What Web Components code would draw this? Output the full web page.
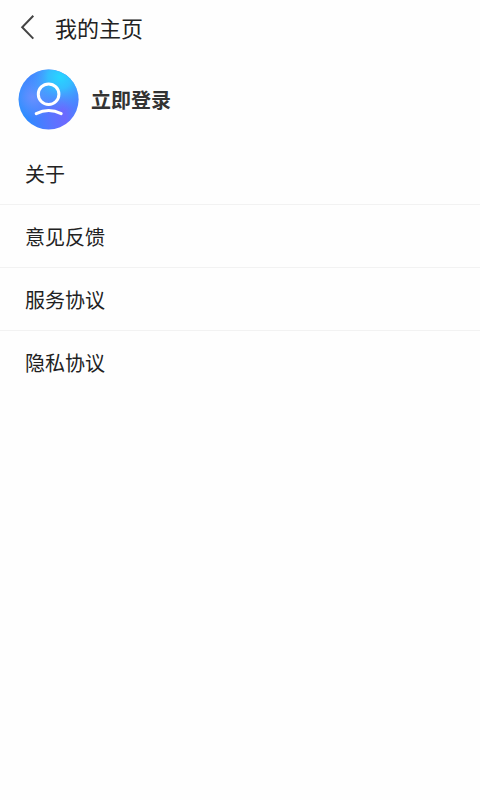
<!DOCTYPE html>
<html lang="zh-CN">
<head>
<meta charset="utf-8">
<meta name="viewport" content="width=device-width, initial-scale=1">
<title>我的主页</title>
<style>
  body {
    margin: 0;
    background: #fefefe;
    color: #222;
    font-family: "Noto Sans CJK SC", sans-serif;
  }
</style>
</head>
<body>
<profile-page>
  <page-header slot="header">我的主页</page-header>
  <login-card slot="account">立即登录</login-card>
  <menu-list>
    <menu-item>关于</menu-item>
    <menu-item>意见反馈</menu-item>
    <menu-item>服务协议</menu-item>
    <menu-item>隐私协议</menu-item>
  </menu-list>
</profile-page>
<script>
  const define = (name, html) => customElements.define(name, class extends HTMLElement {
    constructor() {
      super();
      const template = document.createElement('template');
      template.innerHTML = html;
      this.attachShadow({ mode: 'open' }).append(template.content.cloneNode(true));
    }
  });

  define('profile-page', `
    <style>
      :host { display: flex; flex-direction: column; min-height: 100vh; }
      main { display: flex; flex-direction: column; }
    </style>
    <slot name="header"></slot>
    <main>
      <slot name="account"></slot>
      <slot></slot>
    </main>`);

  define('page-header', `
    <style>
      :host { display: block; }
      header { display: flex; align-items: center; height: 54px; padding-left: 15px; gap: 16px; }
      button { display: flex; padding: 0; border: 0; background: none; color: #444; cursor: pointer; }
      h1 { margin: 0; font-size: 22px; line-height: 32px; font-weight: 400; }
    </style>
    <header>
      <button type="button" aria-label="返回">
        <svg width="24" height="28" viewBox="0 0 24 28" fill="none" stroke="currentColor" stroke-width="2" aria-hidden="true">
          <path d="M18.3 2.8 7.2 14.2 18.3 25.6"/>
        </svg>
      </button>
      <h1><slot></slot></h1>
    </header>`);

  define('login-card', `
    <style>
      :host { display: block; padding: 15px 18px 12px; }
      button {
        display: flex; align-items: center; gap: 12px; width: 100%; padding: 0;
        border: 0; background: none; color: #333; cursor: pointer;
        font: 700 20px/30px "Noto Sans CJK SC", sans-serif; text-align: left;
      }
      svg { flex: none; }
    </style>
    <button type="button">
      <svg width="61" height="61" viewBox="0 0 61 61" fill="none" aria-hidden="true">
        <defs>
          <linearGradient id="base" x1="2" y1="46" x2="56" y2="36" gradientUnits="userSpaceOnUse">
            <stop offset="0" stop-color="#238fff"/>
            <stop offset=".55" stop-color="#5a74ff"/>
            <stop offset=".8" stop-color="#6c69ff"/>
            <stop offset="1" stop-color="#4f7fff"/>
          </linearGradient>
          <radialGradient id="violet" cx="15" cy="28" r="22" gradientUnits="userSpaceOnUse">
            <stop offset="0" stop-color="#6a90ff"/>
            <stop offset="1" stop-color="#5e98ff" stop-opacity="0"/>
          </radialGradient>
          <radialGradient id="cyan" cx="42" cy="8" r="34" gradientUnits="userSpaceOnUse">
            <stop offset="0" stop-color="#27d6ff"/>
            <stop offset=".35" stop-color="#2fc6ff" stop-opacity=".9"/>
            <stop offset="1" stop-color="#3aa0ff" stop-opacity="0"/>
          </radialGradient>
        </defs>
        <circle cx="30.6" cy="30.5" r="30" fill="url(#base)"/>
        <circle cx="30.6" cy="30.5" r="30" fill="url(#violet)"/>
        <circle cx="30.6" cy="30.5" r="30" fill="url(#cyan)"/>
        <circle cx="30.6" cy="25.2" r="10.3" stroke="#fff" stroke-width="3"/>
        <path d="M18.2 44.6Q30.6 38.2 43.2 44.6" stroke="#fff" stroke-width="3" stroke-linecap="round"/>
      </svg>
      <span><slot></slot></span>
    </button>`);

  define('menu-list', `
    <style>
      :host { display: block; }
      nav { display: flex; flex-direction: column; }
      ::slotted(:not(:last-child)) { border-bottom: 1px solid #f2f2f2; }
    </style>
    <nav><slot></slot></nav>`);

  define('menu-item', `
    <style>
      :host { display: block; }
      a { display: block; padding: 17px 25px 15px; font-size: 20px; line-height: 30px; color: inherit; text-decoration: none; }
    </style>
    <a href="#"><slot></slot></a>`);
</script>
</body>
</html>
